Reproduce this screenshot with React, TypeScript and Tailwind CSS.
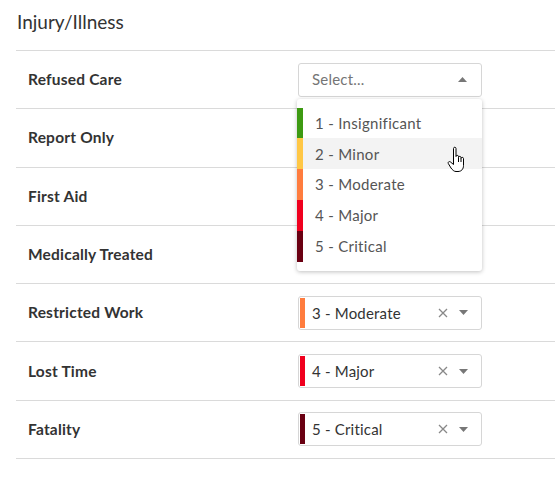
import React from "react"

type Level = { label: string; color: string }

const levels: Level[] = [
  { label: "1 - Insignificant", color: "bg-[#3d9a12]" },
  { label: "2 - Minor", color: "bg-[#ffc745]" },
  { label: "3 - Moderate", color: "bg-[#ff7c3e]" },
  { label: "4 - Major", color: "bg-[#f0001e]" },
  { label: "5 - Critical", color: "bg-[#6a0012]" },
]

const Caret = ({ up }: { up?: boolean }) => (
  <svg width="9" height="5" viewBox="0 0 9 5" className={up ? "rotate-180" : ""}>
    <path d="M0 0 L9 0 L4.5 5 Z" fill="#777" />
  </svg>
)

const Cross = () => (
  <svg width="10" height="10" viewBox="0 0 10 10">
    <path d="M1 1 L9 9 M9 1 L1 9" stroke="#888" strokeWidth="1.3" />
  </svg>
)

const Hand = () => (
  <svg width="21" height="27" viewBox="0 0 21 27" className="absolute z-20 left-[447px] top-[146px]">
    <path
      d="M6.5 2.5 C6.5 0.8 9 0.8 9 2.5 L9 10.5 C9 9 11.5 9 11.5 10.5 L11.5 11.5 C11.5 10 14 10 14 11.5 L14 12.5 C14 11 16.5 11 16.5 12.5 L16.5 19.5 C16.5 23 14.5 25.5 11 25.5 L9 25.5 C7 25.5 5.5 24 4 22 L1.3 17.5 C0.6 16 2.3 15 3.5 16 L6.5 18.5 Z"
      fill="#fff"
      stroke="#000"
      strokeWidth="1"
      strokeLinejoin="round"
    />
    <path d="M11.5 11.5 L11.5 16 M14 12.5 L14 16" stroke="#000" strokeWidth="1" />
  </svg>
)

const Selected = ({ level }: { level: Level }) => (
  <div className="w-[184px] h-[34px] border border-[#d6d6d6] rounded-[3px] bg-white flex items-center p-px">
    <div className={`w-[5px] h-full ${level.color}`}></div>
    <span className="ml-[7px] text-[15px] text-[#333] tracking-[0.2px] flex-1">{level.label}</span>
    <Cross />
    <span className="ml-[11px] mr-[12px] flex"><Caret /></span>
  </div>
)

const OpenSelect = () => (
  <div className="relative w-[184px] h-[34px]">
    <div className="w-full h-full border border-[#d6d6d6] rounded-[3px] bg-white flex items-center pl-[13px]">
      <span className="text-[15px] text-[#757575] tracking-[0.2px] flex-1">Select...</span>
      <span className="mr-[14px] flex"><Caret up /></span>
    </div>
    <div className="absolute z-10 left-[-1px] top-[36px] w-[185px] bg-white rounded-[3px] shadow-[0_1px_4px_rgba(0,0,0,0.25)] py-[9px]">
      {levels.map((l, i) => (
        <div key={i} className={`h-[30.8px] flex items-center ${i === 1 ? "bg-[#f3f3f3]" : ""}`}>
          <div className={`w-[6px] h-full ${l.color}`}></div>
          <span className="ml-[12px] text-[15px] text-[#555] tracking-[0.3px]">{l.label}</span>
        </div>
      ))}
    </div>
  </div>
)

const rows: { name: string; value?: number; open?: boolean }[] = [
  { name: "Refused Care", open: true },
  { name: "Report Only" },
  { name: "First Aid" },
  { name: "Medically Treated" },
  { name: "Restricted Work", value: 2 },
  { name: "Lost Time", value: 3 },
  { name: "Fatality", value: 4 },
]

export default function App() {
  return (
    <div className="relative w-[555px] h-[492px] bg-white pl-4 font-['Lato','Liberation_Sans',sans-serif]">
      <h2 className="h-[51px] border-b border-[#dadada] pt-[10px] pl-px text-[19px] leading-[24px] text-[#333]">
        Injury/Illness
      </h2>
      {rows.map((r, i) => (
        <div key={i} className="h-[58.3px] border-b border-[#dadada] flex items-center">
          <div className="w-[282px] pl-3 text-[15.5px] font-bold text-[#333] tracking-[0.2px]">{r.name}</div>
          {r.open && <OpenSelect />}
          {r.value !== undefined && <Selected level={levels[r.value]} />}
        </div>
      ))}
      <Hand />
    </div>
  )
}
